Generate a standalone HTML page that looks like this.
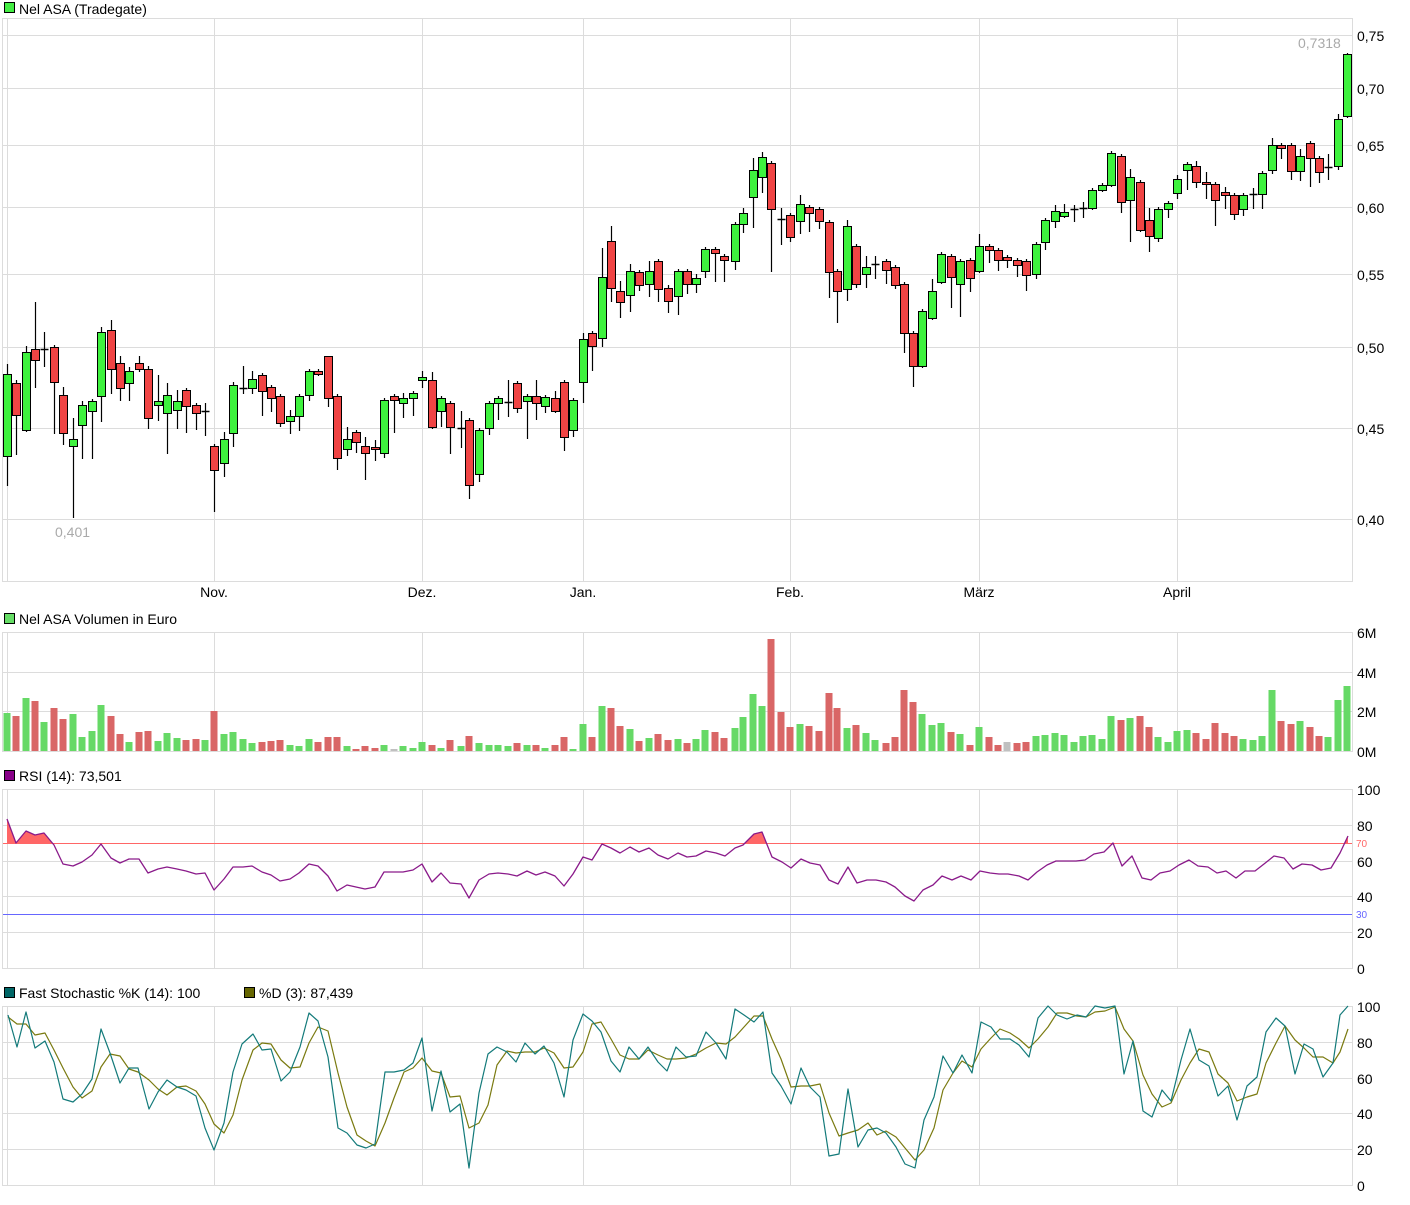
<!DOCTYPE html>
<html><head><meta charset="utf-8">
<style>
html,body{margin:0;padding:0;background:#fff;}
body{width:1410px;height:1200px;overflow:hidden;font-family:"Liberation Sans",Arial,sans-serif;}
svg text{font-family:"Liberation Sans",Arial,sans-serif;}
</style></head>
<body>
<svg id="s" width="1410" height="1200" xmlns="http://www.w3.org/2000/svg">
<rect width="1410" height="1200" fill="#fff"/>
<g id="grid"></g>
<g id="lines"></g>
<g id="cand"></g>
<g id="txt" font-size="14" fill="#000">
<rect x="4.5" y="2.5" width="10" height="10" fill="#44ee44" stroke="#000"/>
<text x="19" y="14">Nel ASA (Tradegate)</text>
<rect x="4.5" y="613.5" width="10" height="10" fill="#66dd66" stroke="#000"/>
<text x="19" y="624">Nel ASA Volumen in Euro</text>
<rect x="4.5" y="770.5" width="10" height="10" fill="#880088" stroke="#000"/>
<text x="19" y="781">RSI (14): 73,501</text>
<rect x="4.5" y="987.5" width="10" height="10" fill="#006666" stroke="#000"/>
<text x="19" y="998">Fast Stochastic %K (14): 100</text>
<rect x="244.5" y="987.5" width="10" height="10" fill="#666600" stroke="#000"/>
<text x="259" y="998">%D (3): 87,439</text>
<text x="1357" y="41">0,75</text>
<text x="1357" y="94">0,70</text>
<text x="1357" y="151">0,65</text>
<text x="1357" y="213">0,60</text>
<text x="1357" y="280">0,55</text>
<text x="1357" y="353">0,50</text>
<text x="1357" y="434">0,45</text>
<text x="1357" y="525">0,40</text>
<text x="1298" y="48" fill="#aaa">0,7318</text>
<text x="55" y="537" fill="#aaa">0,401</text>
<text x="214" y="597" text-anchor="middle">Nov.</text>
<text x="422" y="597" text-anchor="middle">Dez.</text>
<text x="583" y="597" text-anchor="middle">Jan.</text>
<text x="790" y="597" text-anchor="middle">Feb.</text>
<text x="979" y="597" text-anchor="middle">März</text>
<text x="1177" y="597" text-anchor="middle">April</text>
<text x="1357" y="638">6M</text>
<text x="1357" y="678">4M</text>
<text x="1357" y="717">2M</text>
<text x="1357" y="757">0M</text>
<text x="1357" y="795">100</text>
<text x="1357" y="831">80</text>
<text x="1357" y="867">60</text>
<text x="1357" y="902">40</text>
<text x="1357" y="938">20</text>
<text x="1357" y="974">0</text>
<text x="1356" y="847" font-size="10" fill="#ff6666">70</text>
<text x="1356" y="918" font-size="10" fill="#6666ff">30</text>
<text x="1357" y="1012">100</text>
<text x="1357" y="1048">80</text>
<text x="1357" y="1084">60</text>
<text x="1357" y="1119">40</text>
<text x="1357" y="1155">20</text>
<text x="1357" y="1191">0</text>
</g>
</svg>
<script>
var NS="http://www.w3.org/2000/svg";
function el(p,t,a){var e=document.createElementNS(NS,t);for(var k in a)e.setAttribute(k,a[k]);p.appendChild(e);return e;}
var G=document.getElementById('grid'),L=document.getElementById('lines'),C=document.getElementById('cand');
var gc="#dcdcdc",vx=[214,422,583,790,979,1177];
function panel(top,bot,hs){
  el(G,'rect',{x:2.5,y:top+.5,width:1350,height:bot-top,fill:'none',stroke:gc});
  el(G,'line',{x1:7.5,y1:top,x2:7.5,y2:bot,stroke:gc});
  vx.forEach(function(x){el(G,'line',{x1:x+.5,y1:top,x2:x+.5,y2:bot,stroke:gc});});
  hs.forEach(function(y){el(G,'line',{x1:3,y1:y+.5,x2:1352,y2:y+.5,stroke:gc});});
}
panel(18,581,[35,88,145,207,274,347,428,519]);
panel(632,751,[672,711]);
panel(789,968,[825,861,896,932]);
panel(1006,1185,[1042,1078,1113,1149]);
var cd="7,374,456,364,486,g;16,383,415,380,455,r;26,352,430,346,432,g;35,349,360,302,388,r;44,349,349,332,367,d;54,347,382,345,434,r;63,395,433,387,445,r;73,439,446,418,518,g;82,405,425,401,459,g;92,401,411,399,459,g;101,332,396,327,422,g;111,330,369,320,394,r;120,363,388,356,401,r;129,371,383,367,401,g;139,363,369,356,372,r;148,369,418,366,429,r;158,401,405,375,421,g;167,395,413,383,454,g;177,401,410,390,429,g;186,390,406,388,433,r;196,405,413,403,430,r;205,411,411,403,436,d;214,446,470,444,512,r;224,439,463,432,477,g;233,385,433,382,447,g;243,388,388,366,394,d;252,379,388,371,394,g;262,375,391,373,416,r;271,387,398,385,412,r;280,396,423,394,427,r;290,416,421,410,434,g;299,396,416,394,431,g;309,371,395,369,401,g;318,371,374,369,376,r;328,356,398,356,407,r;337,396,458,394,470,r;347,439,449,427,456,g;356,432,442,430,453,r;365,446,453,437,480,r;375,447,449,440,461,r;384,400,453,398,458,g;394,396,400,394,433,r;403,398,403,393,418,g;413,393,398,391,416,g;422,377,380,371,388,g;432,380,427,372,429,r;441,398,411,396,427,g;450,403,427,401,454,r;461,428,428,411,448,d;469,420,485,418,499,r;479,430,474,428,482,g;489,403,428,401,435,g;498,398,403,396,420,g;508,402,402,380,417,d;517,383,408,381,413,r;527,396,401,394,439,g;536,396,403,380,420,r;545,397,406,395,413,g;555,398,411,391,413,r;564,382,437,380,451,r;573,400,430,398,437,g;583,339,382,333,403,g;592,333,346,331,371,r;602,277,338,248,347,g;611,241,288,226,302,r;620,291,302,281,318,r;630,271,295,264,312,g;639,272,285,270,291,r;649,271,284,261,297,g;658,261,289,259,302,r;668,288,301,285,313,r;678,271,296,269,315,g;687,271,284,269,294,r;696,278,284,274,293,g;705,249,271,247,278,g;715,249,253,247,282,r;724,256,260,254,282,r;735,224,261,222,270,g;743,213,224,208,233,g;753,170,197,158,228,g;762,157,177,152,193,g;771,163,209,161,272,r;781,219,219,208,245,d;790,215,237,213,242,r;800,204,221,195,234,g;809,207,213,205,232,r;819,209,221,207,229,r;829,222,272,220,298,r;837,271,291,269,323,r;847,226,289,220,301,g;856,246,284,244,288,r;866,267,274,256,288,g;875,264,264,256,279,d;886,261,270,259,284,r;895,267,285,265,289,r;904,284,333,282,353,r;913,333,366,331,387,r;922,311,366,309,368,g;932,291,318,279,320,g;941,254,282,252,284,g;951,256,277,254,308,r;960,261,284,259,317,g;970,260,278,258,292,r;979,246,271,234,273,g;989,246,250,244,263,r;998,250,260,248,271,r;1007,257,260,255,268,r;1017,260,265,258,277,r;1026,261,275,259,291,r;1036,244,274,242,279,g;1045,220,242,218,250,g;1055,211,221,205,228,g;1064,212,216,204,218,g;1074,209,209,205,222,d;1083,208,208,202,218,d;1092,190,208,188,210,g;1102,185,190,183,192,g;1111,153,185,151,187,g;1121,156,202,154,213,r;1130,177,200,169,242,g;1140,182,230,180,232,r;1149,220,236,208,252,r;1158,209,238,207,242,g;1168,203,209,201,218,g;1177,179,193,175,199,g;1187,164,170,162,190,g;1196,166,182,161,188,r;1206,182,184,172,199,r;1215,184,200,182,226,r;1225,192,195,187,209,r;1234,195,214,193,220,r;1243,195,209,193,216,g;1253,194,194,188,209,d;1262,173,194,171,209,g;1272,145,170,138,174,g;1281,145,148,143,159,r;1291,145,171,143,180,r;1300,156,171,149,181,g;1310,143,158,141,187,r;1319,158,172,156,183,r;1328,167,167,154,180,d;1338,119,166,114,170,g;1347,54,116,53,118,g";
var cs=cd.split(';').map(function(s){var a=s.split(',');return {x:+a[0],t:+a[1],b:+a[2],h:+a[3],l:+a[4],c:a[5]};});
cs.forEach(function(c){
  el(C,'line',{x1:c.x+.5,y1:c.h,x2:c.x+.5,y2:c.l,stroke:'#000','stroke-width':1.2});
  if(c.c=='d'){el(C,'line',{x1:c.x-3.5,y1:c.t+.5,x2:c.x+4.5,y2:c.t+.5,stroke:'#000','stroke-width':1.5});}
  else{var hh=Math.max(c.b-c.t,2);el(C,'rect',{x:c.x-3.5,y:c.t+.5,width:8,height:hh,fill:c.c=='g'?'#3ef23e':'#f04444',stroke:'#000','stroke-width':1});}
});
var vol=[[7,713],[16,716],[26,698],[35,701],[44,722],[54,708],[63,719],[73,714],[82,737],[92,731],[101,705],[111,716],[120,734],[129,742],[139,732],[148,731],[158,741],[167,733],[177,738],[186,740],[196,739],[205,740],[214,711],[224,734],[233,732],[243,739],[252,743],[262,742],[271,741],[280,740],[290,745],[299,746],[309,739],[318,742],[328,737],[337,737],[347,746],[356,749],[365,746],[375,748],[384,745],[394,749],[403,746],[413,748],[422,742],[432,745],[441,748],[450,740],[461,746],[469,736],[479,743],[489,745],[498,745],[508,746],[517,743],[527,745],[536,745],[545,748],[555,745],[564,737],[573,749],[583,724],[592,737],[602,706],[611,708],[620,726],[630,729],[639,741],[649,738],[658,734],[668,740],[678,739],[687,743],[696,739],[705,730],[715,732],[724,738],[735,728],[743,717],[753,694],[762,706],[771,639],[781,712],[790,727],[800,724],[809,726],[819,731],[829,693],[837,708],[847,728],[856,725],[866,733],[875,740],[886,743],[895,737],[904,690],[913,702],[922,714],[932,725],[941,723],[951,732],[960,734],[970,745],[979,727],[989,737],[998,745],[1007,742],[1017,743],[1026,742],[1036,736],[1045,735],[1055,733],[1064,735],[1074,742],[1083,736],[1092,735],[1102,739],[1111,716],[1121,720],[1130,718],[1140,716],[1149,727],[1158,737],[1168,742],[1177,731],[1187,730],[1196,733],[1206,739],[1215,723],[1225,733],[1234,736],[1243,739],[1253,740],[1262,736],[1272,690],[1281,721],[1291,724],[1300,721],[1310,727],[1319,736],[1328,737],[1338,700],[1347,686]];
vol.forEach(function(v){
  var best=cs[0];cs.forEach(function(c){if(Math.abs(c.x-v[0])<Math.abs(best.x-v[0]))best=c;});
  var col=best.c=='r'?'#d96666':'#66d966';
  if(v[0]==781)col='#d96666';
  if(v[0]==394||v[0]==1007)col='#c0c0c0';
  el(C,'rect',{x:v[0]-3.5,y:v[1],width:7,height:751-v[1],fill:col});
});
var rsi=[[7,819],[16,843],[26,831],[35,835],[44,833],[54,845],[63,864],[73,866],[82,862],[92,855],[101,844],[111,858],[120,863],[129,859],[139,859],[148,873],[158,869],[167,867],[177,869],[186,871],[196,874],[205,873],[214,890],[224,879],[233,867],[243,867],[252,866],[262,872],[271,875],[280,881],[290,879],[299,873],[309,864],[318,866],[328,876],[337,891],[347,885],[356,887],[365,889],[375,887],[384,872],[394,872],[403,872],[413,870],[422,864],[432,882],[441,873],[450,883],[461,884],[469,898],[479,880],[489,874],[498,873],[508,874],[517,876],[527,871],[536,875],[545,872],[555,876],[564,886],[573,874],[583,857],[592,860],[602,844],[611,848],[620,853],[630,847],[639,852],[649,848],[658,855],[668,859],[678,853],[687,857],[696,856],[706,851],[716,853],[725,856],[735,848],[743,845],[754,834],[762,832],[772,857],[782,862],[791,868],[801,859],[810,863],[820,865],[829,880],[838,884],[848,867],[857,883],[867,880],[876,880],[886,882],[895,887],[905,896],[914,901],[923,890],[933,885],[942,876],[952,880],[961,876],[971,880],[980,871],[990,873],[999,874],[1008,874],[1019,876],[1028,880],[1037,872],[1047,865],[1056,861],[1066,861],[1076,861],[1085,860],[1094,854],[1104,852],[1113,843],[1122,866],[1132,856],[1142,878],[1151,880],[1160,873],[1170,871],[1179,865],[1189,860],[1198,866],[1208,867],[1217,873],[1226,871],[1236,878],[1245,871],[1255,871],[1264,864],[1274,856],[1284,858],[1293,869],[1302,864],[1312,865],[1321,870],[1331,868],[1340,853],[1348,836]];
function fillAbove(pts,lvl){
  var d='',on=false;
  for(var i=0;i<pts.length;i++){
    var p=pts[i],q=pts[i+1];
    if(p[1]<lvl){if(!on){d+='M'+p[0]+','+lvl+' ';on=true;}d+='L'+p[0]+','+p[1]+' ';}
    if(q){
      if((p[1]<lvl)!=(q[1]<lvl)){var t=(lvl-p[1])/(q[1]-p[1]);var x=p[0]+t*(q[0]-p[0]);
        if(on){d+='L'+x+','+lvl+' Z ';on=false;}else{d+='M'+x+','+lvl+' ';on=true;}}
    } else if(on){d+='L'+p[0]+','+lvl+' Z';}
  }
  return d;
}
el(L,'path',{d:fillAbove(rsi,843),fill:'#ff6666'});
el(L,'line',{x1:3,y1:843.5,x2:1352,y2:843.5,stroke:'#ff6666'});
el(L,'line',{x1:3,y1:914.5,x2:1352,y2:914.5,stroke:'#6666ff'});
function pl(pts,col,w){el(L,'polyline',{points:pts.map(function(p){return p.join(',');}).join(' '),fill:'none',stroke:col,'stroke-width':w||1.2,'stroke-linejoin':'round'});}
pl(rsi,'#8a1a8a',1.3);
var K=[[8,1015],[17,1047],[26,1012],[35,1048],[45,1041],[54,1062],[63,1099],[73,1102],[82,1094],[92,1079],[101,1029],[110,1053],[120,1083],[129,1068],[138,1068],[149,1109],[158,1092],[167,1080],[177,1087],[186,1090],[196,1096],[205,1128],[214,1150],[224,1123],[233,1072],[242,1044],[253,1034],[262,1050],[271,1049],[281,1081],[290,1072],[300,1047],[309,1013],[318,1021],[328,1057],[338,1128],[347,1133],[357,1145],[366,1148],[375,1144],[385,1072],[394,1072],[404,1070],[413,1063],[422,1038],[432,1111],[441,1071],[450,1112],[460,1104],[469,1168],[479,1093],[488,1054],[497,1047],[507,1052],[516,1062],[525,1043],[535,1054],[544,1046],[554,1063],[564,1097],[573,1040],[583,1014],[592,1021],[601,1032],[611,1061],[620,1072],[629,1047],[639,1059],[648,1047],[658,1062],[667,1071],[676,1047],[686,1057],[696,1056],[706,1032],[716,1043],[726,1059],[735,1009],[744,1015],[754,1022],[763,1012],[772,1073],[781,1086],[791,1104],[801,1068],[810,1087],[820,1097],[829,1156],[839,1154],[848,1089],[858,1147],[868,1130],[877,1128],[886,1133],[896,1147],[905,1164],[915,1168],[924,1120],[934,1097],[943,1056],[953,1073],[962,1055],[972,1073],[981,1022],[991,1027],[1000,1039],[1010,1039],[1019,1045],[1029,1057],[1038,1018],[1048,1006],[1057,1015],[1067,1019],[1077,1015],[1086,1017],[1095,1006],[1105,1008],[1115,1006],[1124,1074],[1133,1041],[1143,1111],[1152,1117],[1162,1090],[1171,1101],[1181,1060],[1190,1029],[1199,1060],[1209,1066],[1218,1096],[1228,1086],[1237,1120],[1247,1086],[1257,1077],[1266,1032],[1276,1018],[1285,1026],[1295,1074],[1304,1044],[1313,1049],[1323,1077],[1333,1063],[1340,1015],[1348,1006]];
var D=[[8,1017],[17,1024],[26,1024],[35,1035],[45,1033],[54,1050],[63,1068],[73,1087],[82,1098],[92,1091],[101,1067],[110,1054],[120,1056],[129,1069],[138,1072],[149,1080],[158,1089],[167,1095],[177,1087],[186,1086],[196,1091],[205,1104],[214,1124],[224,1133],[233,1115],[242,1080],[253,1050],[262,1043],[271,1044],[281,1060],[290,1068],[300,1067],[309,1043],[318,1027],[328,1031],[338,1073],[347,1107],[357,1135],[366,1141],[375,1146],[385,1123],[394,1098],[404,1072],[413,1068],[422,1058],[432,1071],[441,1073],[450,1097],[460,1096],[469,1128],[479,1123],[488,1105],[497,1065],[507,1051],[516,1053],[525,1052],[535,1052],[544,1048],[554,1053],[564,1068],[573,1067],[583,1052],[592,1024],[601,1022],[611,1039],[620,1055],[629,1059],[639,1059],[648,1050],[658,1055],[667,1059],[676,1059],[686,1058],[696,1054],[706,1048],[716,1043],[726,1044],[735,1037],[744,1027],[754,1016],[763,1016],[772,1039],[781,1059],[791,1087],[801,1086],[810,1086],[820,1084],[829,1113],[839,1136],[848,1133],[858,1130],[868,1123],[877,1135],[886,1131],[896,1137],[905,1148],[915,1160],[924,1150],[934,1128],[943,1090],[953,1073],[962,1061],[972,1067],[981,1049],[991,1038],[1000,1029],[1010,1033],[1019,1039],[1029,1048],[1038,1039],[1048,1027],[1057,1013],[1067,1013],[1077,1016],[1086,1017],[1095,1012],[1105,1011],[1115,1007],[1124,1029],[1133,1041],[1143,1075],[1152,1094],[1162,1107],[1171,1103],[1181,1080],[1190,1063],[1199,1049],[1209,1052],[1218,1074],[1228,1083],[1237,1101],[1247,1097],[1257,1094],[1266,1063],[1276,1043],[1285,1026],[1295,1040],[1304,1048],[1313,1057],[1323,1057],[1333,1063],[1340,1052],[1348,1029]];
pl(D,'#7a7a10',1.2);
pl(K,'#137a7a',1.2);
</script>
</body></html>
